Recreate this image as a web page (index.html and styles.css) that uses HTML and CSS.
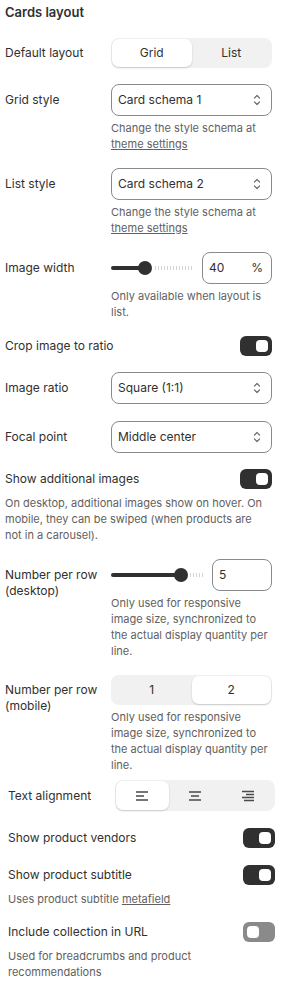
FILE: index.html
```html
<!DOCTYPE html>
<html lang="en">
<head>
  <meta charset="UTF-8" />
  <title>Cards layout</title>
  <meta name="viewport" content="width=device-width, initial-scale=1.0" />
  <link rel="stylesheet" href="styles.css">
</head>
<body>
<div class="panel">
  <h2 class="title">Cards layout</h2>

  <div class="row first">
    <div class="label seg-label">Default layout</div>
    <div class="control">
      <div class="segmented">
        <span class="seg active">Grid</span>
        <span class="seg">List</span>
      </div>
    </div>
  </div>

  <div class="row">
    <div class="label">Grid style</div>
    <div class="control">
      <div class="select">Card schema 1 <svg class="chev" viewBox="0 0 10 14"><path d="M2.5 5 5 2.5 7.5 5M2.5 9 5 11.5 7.5 9"/></svg></div>
      <p class="hint">Change the style schema at <a href="#">theme settings</a></p>
    </div>
  </div>

  <div class="row">
    <div class="label">List style</div>
    <div class="control">
      <div class="select">Card schema 2 <svg class="chev" viewBox="0 0 10 14"><path d="M2.5 5 5 2.5 7.5 5M2.5 9 5 11.5 7.5 9"/></svg></div>
      <p class="hint">Change the style schema at <a href="#">theme settings</a></p>
    </div>
  </div>

  <div class="row">
    <div class="label">Image width</div>
    <div class="control">
      <div class="range-row">
        <div class="slider">
          <div class="fill" style="width: 34px"></div>
          <div class="thumb" style="left: 34px"></div>
          <div class="rest" style="left: 44px"></div>
        </div>
        <div class="num wide"><span>40</span><span>%</span></div>
      </div>
      <p class="hint">Only available when layout is list.</p>
    </div>
  </div>

  <div class="row toggle-row">
    <div class="label">Crop image to ratio</div>
    <span class="toggle on"></span>
  </div>

  <div class="row">
    <div class="label">Image ratio</div>
    <div class="control">
      <div class="select">Square (1:1) <svg class="chev" viewBox="0 0 10 14"><path d="M2.5 5 5 2.5 7.5 5M2.5 9 5 11.5 7.5 9"/></svg></div>
    </div>
  </div>

  <div class="row focal">
    <div class="label">Focal point</div>
    <div class="control">
      <div class="select">Middle center <svg class="chev" viewBox="0 0 10 14"><path d="M2.5 5 5 2.5 7.5 5M2.5 9 5 11.5 7.5 9"/></svg></div>
    </div>
  </div>

  <div class="row toggle-row">
    <div class="label">Show additional images</div>
    <span class="toggle on"></span>
  </div>
  <p class="hint full">On desktop, additional images show on hover. On mobile, they can be swiped (when products are not in a carousel).</p>

  <div class="row">
    <div class="label">Number per row (desktop)</div>
    <div class="control">
      <div class="range-row">
        <div class="slider">
          <div class="fill" style="width: 70px"></div>
          <div class="thumb" style="left: 70px"></div>
          <div class="rest" style="left: 79px"></div>
        </div>
        <div class="num"><span>5</span></div>
      </div>
      <p class="hint">Only used for responsive image size, synchronized to the actual display quantity per line.</p>
    </div>
  </div>

  <div class="row">
    <div class="label seg-label">Number per row (mobile)</div>
    <div class="control">
      <div class="segmented">
        <span class="seg">1</span>
        <span class="seg active">2</span>
      </div>
      <p class="hint">Only used for responsive image size, synchronized to the actual display quantity per line.</p>
    </div>
  </div>

  <div class="lower">
    <div class="row align-row">
      <div class="label seg-label">Text alignment</div>
      <div class="control">
        <div class="segmented">
          <span class="seg active">
            <svg class="align" viewBox="0 0 14 12"><path d="M1 2h12M1 6h8M1 10h12"/></svg>
          </span>
          <span class="seg">
            <svg class="align" viewBox="0 0 14 12"><path d="M1 2h12M3 6h8M1 10h12"/></svg>
          </span>
          <span class="seg">
            <svg class="align" viewBox="0 0 14 12"><path d="M1 1.5h12M5 4.5h8M1 7.5h12M3 10.5h10"/></svg>
          </span>
        </div>
      </div>
    </div>

    <div class="row toggle-row">
      <div class="label">Show product vendors</div>
      <span class="toggle on"></span>
    </div>

    <div class="row toggle-row">
      <div class="label">Show product subtitle</div>
      <span class="toggle on"></span>
    </div>
    <p class="hint full">Uses product subtitle <a href="#">metafield</a></p>

    <div class="row toggle-row after-hint">
      <div class="label">Include collection in URL</div>
      <span class="toggle"></span>
    </div>
    <p class="hint full">Used for breadcrumbs and product recommendations</p>
  </div>
</div>
</body>
</html>
```

FILE: styles.css
```css
* {
  box-sizing: border-box;
}

body {
  margin: 0;
  background: #fff;
  color: #303030;
  font-family: Inter, "Noto Sans", sans-serif;
  font-size: 12px;
  line-height: 16px;
}

.panel {
  width: 281px;
  padding: 4px 9px 0 5px;
}

.title {
  margin: 0;
  font-size: 13px;
  font-weight: 600;
  line-height: 16px;
}

.row {
  display: flex;
  margin-top: 16px;
}

.row.first {
  margin-top: 18px;
}

.row.focal {
  margin-top: 17px;
}

.label {
  width: 106px;
  flex-shrink: 0;
  padding: 8px 6px 0 0;
}

.label.seg-label {
  padding-top: 7px;
}

.control {
  flex: 1;
  min-width: 0;
}

/* segmented buttons */
.segmented {
  display: flex;
  height: 30px;
  padding: 1px;
  background: #f1f1f1;
  border-radius: 8px;
}

.seg {
  flex: 1;
  display: flex;
  align-items: center;
  justify-content: center;
  border-radius: 7px;
  font-size: 12px;
}

.seg.active {
  background: #fff;
  box-shadow: 0 1px 2px rgba(0,0,0,0.18);
}

.align {
  width: 14px;
  height: 12px;
  fill: none;
  stroke: #4a4a4a;
  stroke-width: 1.4;
}

/* select */
.select {
  height: 32px;
  border: 1px solid #8a8a8a;
  border-radius: 8px;
  display: flex;
  align-items: center;
  justify-content: space-between;
  padding: 0 9px 0 6px;
}

.chev {
  width: 10px;
  height: 14px;
  fill: none;
  stroke: #707070;
  stroke-width: 1.2;
  stroke-linecap: round;
  stroke-linejoin: round;
}

/* hints */
.hint {
  margin: 4px 0 0;
  font-size: 11px;
  line-height: 16px;
  color: #616161;
}

.hint a {
  color: #616161;
  text-decoration: underline;
}

.hint.full {
  margin-top: 6px;
  padding-right: 8px;
}

/* range slider */
.range-row {
  display: flex;
  align-items: center;
  gap: 9px;
}

.slider {
  position: relative;
  flex: 1;
  height: 32px;
}

.slider .fill {
  position: absolute;
  left: 0;
  top: 14px;
  height: 4px;
  border-radius: 2px;
  background: #303030;
}

.slider .rest {
  position: absolute;
  right: 0;
  top: 14px;
  height: 4px;
  background: repeating-linear-gradient(90deg, #d4d4d4 0 1px, transparent 1px 3px);
}

.slider .thumb {
  position: absolute;
  top: 9px;
  width: 14px;
  height: 14px;
  margin-left: -7px;
  border-radius: 50%;
  background: #303030;
}

.num {
  width: 60px;
  height: 32px;
  border: 1px solid #8a8a8a;
  border-radius: 8px;
  display: flex;
  align-items: center;
  justify-content: space-between;
  padding: 0 8px 0 6px;
}

.num.wide {
  width: 70px;
}

/* toggles */
.toggle-row {
  align-items: center;
  justify-content: space-between;
}

.toggle-row .label {
  width: auto;
  padding: 0;
}

.toggle {
  width: 32px;
  height: 20px;
  border-radius: 6px;
  background: #8a8a8a;
  position: relative;
  flex-shrink: 0;
}

.toggle::after {
  content: "";
  position: absolute;
  top: 4px;
  left: 4px;
  width: 12px;
  height: 12px;
  border-radius: 4px;
  background: #fff;
}

.toggle.on {
  background: #303030;
}

.toggle.on::after {
  left: 16px;
}

/* lower part sits a little further right */
.lower {
  margin: 0 -3px 0 3px;
}

.row.align-row {
  margin-top: 7px;
}

.align-row .label {
  width: 107px;
  padding-top: 8px;
}

.align-row .segmented {
  height: 31px;
}

.lower .row.toggle-row {
  margin-top: 17px;
}

.lower .row.after-hint {
  margin-top: 15px;
}
```
